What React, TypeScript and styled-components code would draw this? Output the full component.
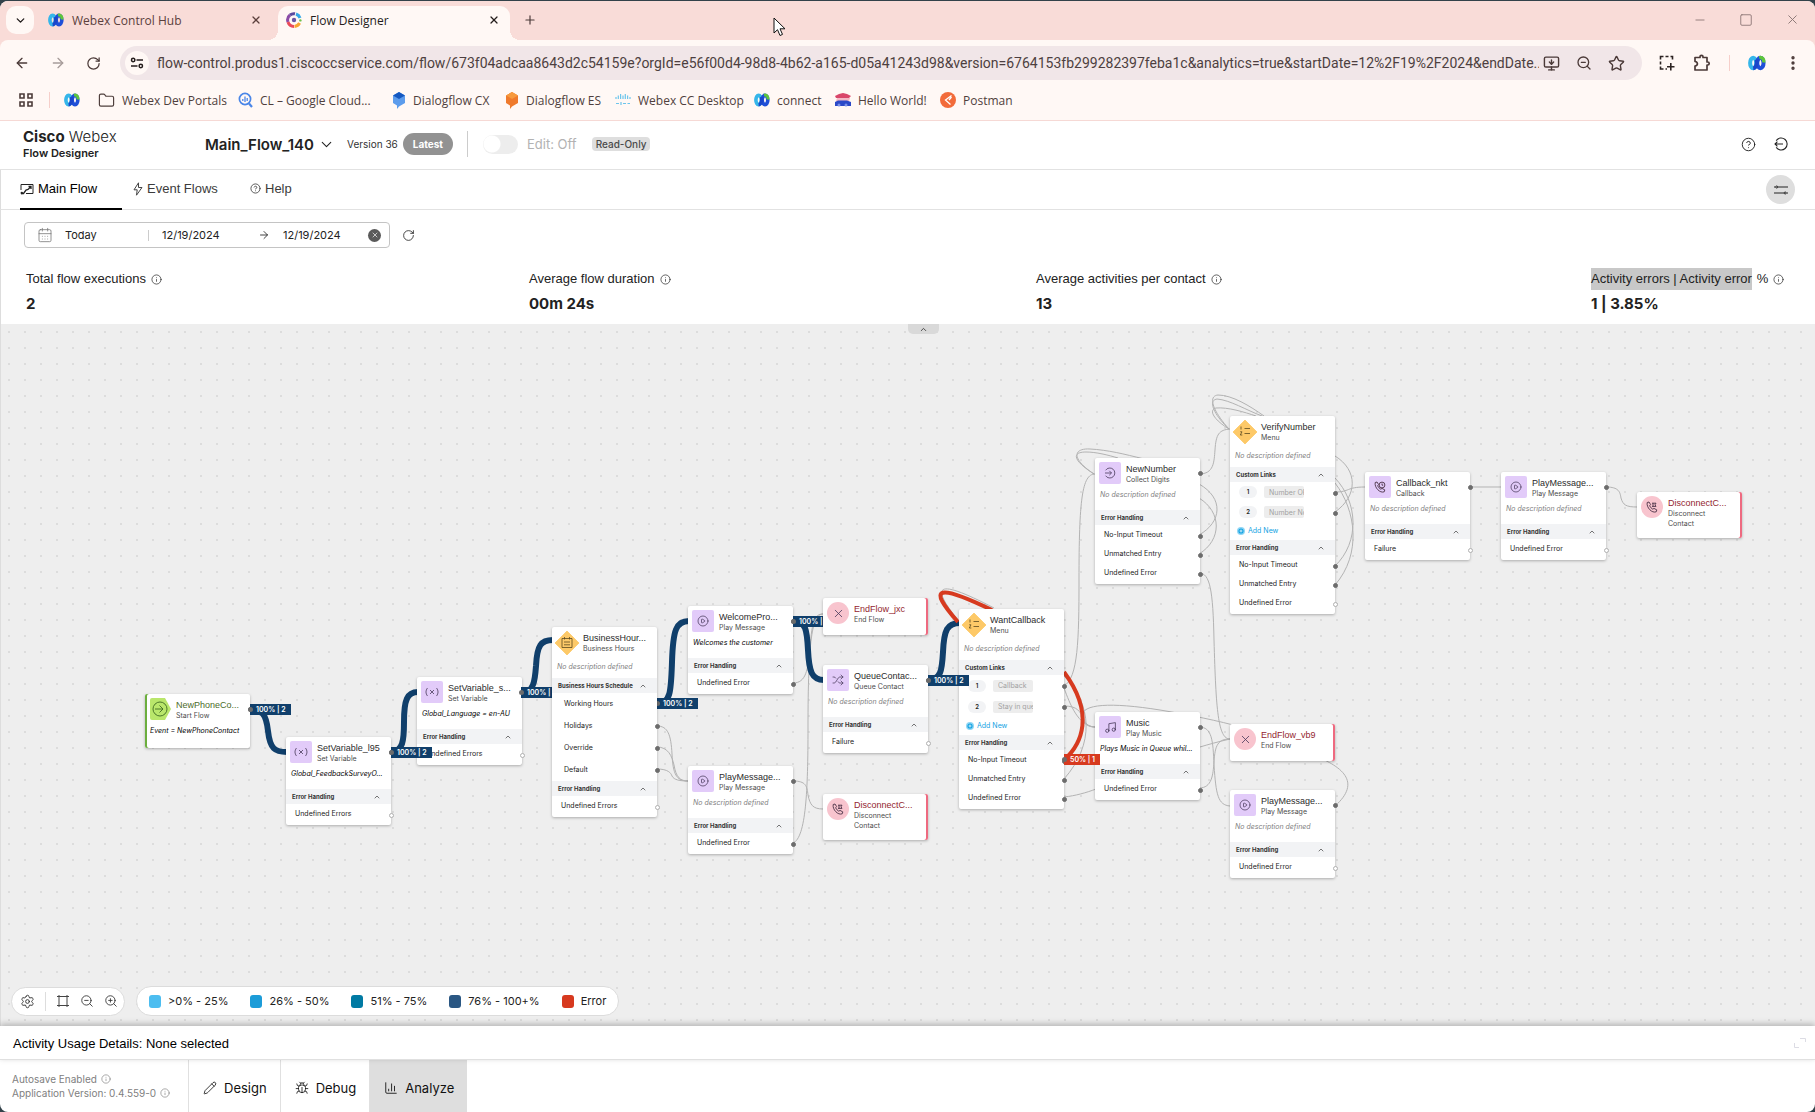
import React from "react";
import styled, { createGlobalStyle, css } from "styled-components";
import {
  ArrowLeft, ArrowRight, RotateCw, X, Plus, ChevronDown, ChevronUp, Folder, Star,
  MoreVertical, ZoomIn, ZoomOut, Info, CircleHelp, Minus, Square, MonitorDown,
  Settings, Pencil, Bug, ChartColumn, Shuffle, CirclePlay, Music, CalendarDays,
} from "lucide-react";

const ui = `Inter, "Liberation Sans", sans-serif`;
const label = `"Liberation Sans", Arial, sans-serif`;
const chrome = `"Open Sans", "Noto Sans", sans-serif`;
const navy = "#103f6b";
const errorRed = "#d73a1f";

const GlobalStyle = createGlobalStyle`
  * { box-sizing: border-box; }
  html, body { margin: 0; background: #33424a; }
  body { font-family: ${ui}; color: #222; }
  button { font: inherit; color: inherit; background: none; border: 0; padding: 0; cursor: pointer; }
  input { font: inherit; color: inherit; background: none; border: 0; padding: 0; min-width: 0; }
  a { color: inherit; text-decoration: none; }
  svg { display: block; flex: none; }
`;

const Desktop = styled.div`
  height: 100vh;
  padding-top: 1px;
`;

const Window = styled.div`
  height: 100%;
  display: flex;
  flex-direction: column;
  border-radius: 8px;
  overflow: hidden;
  background: #fff;
`;

/* ---------- browser frame ---------- */

const TabStrip = styled.header`
  display: flex;
  align-items: flex-end;
  height: 47px;
  margin-bottom: -8px;
  padding: 0 0 8px 6px;
  background: #f9dcd8;
  font-family: ${chrome};
  font-size: 12px;
`;

const TabSearch = styled.button`
  display: grid;
  place-items: center;
  width: 28px;
  height: 28px;
  margin-bottom: 6px;
  border-radius: 10px;
  background: #fff8f5;
  color: #1f1b1a;
`;

const BrowserTab = styled.div<{ $active?: boolean }>`
  position: relative;
  display: flex;
  align-items: center;
  gap: 8px;
  width: ${(p) => (p.$active ? 232 : 244)}px;
  height: 34px;
  padding: ${(p) => (p.$active ? "4px 10px 10px 8px" : "4px 16px 10px 14px")};
  color: ${(p) => (p.$active ? "#241d1c" : "#5b403d")};
  ${(p) =>
    p.$active &&
    css`
      background: #fff8f5;
      border-radius: 10px 10px 0 0;
      &::before,
      &::after {
        content: "";
        position: absolute;
        bottom: 0;
        width: 10px;
        height: 10px;
      }
      &::before {
        left: -10px;
        background: radial-gradient(circle at 0 0, transparent 10px, #fff8f5 10px);
      }
      &::after {
        right: -10px;
        background: radial-gradient(circle at 100% 0, transparent 10px, #fff8f5 10px);
      }
    `}
  button {
    margin-left: auto;
  }
`;

const NewTab = styled.button`
  display: grid;
  place-items: center;
  width: 28px;
  height: 28px;
  margin: 0 0 6px 6px;
  color: #4b3a38;
`;

const WindowButtons = styled.div`
  display: flex;
  gap: 32px;
  margin: 0 15px 13px auto;
  color: #8a7573;
`;

const Toolbar = styled.div`
  position: relative;
  display: flex;
  align-items: center;
  height: 46px;
  padding: 0 13px 0 14px;
  background: #fff8f5;
  border-radius: 8px 8px 0 0;
  color: #4b3a38;
`;

const NavButtons = styled.div`
  display: flex;
  gap: 20px;
  width: 106px;
`;

const NavButton = styled.button<{ $muted?: boolean }>`
  color: ${(p) => (p.$muted ? "#a79c9a" : "#4b3a38")};
`;

const AddressBar = styled.div`
  flex: 1;
  display: flex;
  align-items: center;
  height: 34px;
  padding: 0 17px 0 5px;
  border-radius: 17px;
  background: #f1e6e8;
  gap: 8px;
`;

const AddressActions = styled.div`
  display: flex;
  align-items: center;
  gap: 16px;
  margin-left: -4px;
`;

const SiteInfo = styled.button`
  display: grid;
  place-items: center;
  width: 24px;
  height: 24px;
  border-radius: 50%;
  background: #fff8f5;
`;

const Address = styled.input`
  flex: 1;
  font-family: Roboto, sans-serif;
  font-size: 14px;
  height: 24px;
  color: #4d3f40;
  outline: none;
`;

const ToolbarEnd = styled.div`
  display: flex;
  align-items: center;
  gap: 18px;
  margin-left: 17px;
`;

const Divider = styled.span<{ $h: number; $color: string }>`
  width: 1px;
  height: ${(p) => p.$h}px;
  background: ${(p) => p.$color};
`;

const Bookmarks = styled.nav`
  display: flex;
  align-items: center;
  height: 35px;
  padding: 0 18px 6px;
  background: #fff8f5;
  border-bottom: 1px solid #f6d9d5;
  font-family: ${chrome};
  font-size: 12px;
  color: #4f3f3d;
`;

const Bookmark = styled.a<{ $w?: number; $first?: boolean }>`
  display: flex;
  align-items: center;
  gap: 7px;
  width: ${(p) => (p.$w ? `${p.$w}px` : "auto")};
  padding-left: ${(p) => (p.$first ? 14 : 0)}px;
  white-space: nowrap;
`;

/* ---------- application header ---------- */

const AppBody = styled.main`
  flex: 1;
  min-height: 0;
  display: flex;
  flex-direction: column;
`;

const AppHeader = styled.div`
  display: flex;
  align-items: center;
  height: 49px;
  padding: 0 27px 2px 23px;
  border-bottom: 1px solid #e2e2e2;
`;

const Brand = styled.div`
  width: 182px;
  strong { font-weight: 700; }
  div:first-child { font-size: 15px; line-height: 18px; font-weight: 300; }
  div:last-child { font-size: 11px; line-height: 14px; font-weight: 600; }
`;

const FlowPicker = styled.button`
  display: flex;
  align-items: center;
  gap: 4px;
  font-size: 15px;
  font-weight: 600;
`;

const Version = styled.span`
  margin-left: 12px;
  font-size: 10px;
  color: #333;
`;

const Pill = styled.span`
  margin: 0 14px 0 5px;
  padding: 0 10px;
  border-radius: 11px;
  background: #929292;
  color: #fff;
  font-size: 10px;
  font-weight: 700;
  line-height: 22px;
`;

const EditToggle = styled.label`
  display: flex;
  align-items: center;
  gap: 9px;
  margin: 0 15px;
  font-size: 13px;
  color: #b2b2b2;
  input {
    appearance: none;
    margin: 0;
    width: 35px;
    height: 19px;
    border-radius: 10px;
    background: radial-gradient(circle at 9px 9px, #fff 8px, #ededed 9px);
  }
`;

const ReadOnly = styled.span`
  padding: 0 4px;
  border-radius: 4px;
  background: #dedede;
  color: #4a4a4a;
  font-size: 10px;
  font-weight: 500;
  line-height: 14px;
`;

const HeaderActions = styled.div`
  display: flex;
  gap: 18px;
  margin-left: auto;
`;

const TabsBar = styled.div`
  display: flex;
  align-items: center;
  height: 40px;
  padding: 0 20px 0 19px;
  border-left: 1px solid #ddd;
  border-bottom: 1px solid #e2e2e2;
`;

const FlowTab = styled.button<{ $active?: boolean; $w: number }>`
  display: flex;
  align-items: center;
  gap: 4px;
  width: ${(p) => p.$w}px;
  height: 40px;
  font-family: ${label};
  font-size: 13px;
  color: ${(p) => (p.$active ? "#000" : "#3c3c3c")};
  border-bottom: 2px solid ${(p) => (p.$active ? "#000" : "transparent")};
  margin-right: 11px;
`;

const RoundButton = styled.button`
  display: grid;
  place-items: center;
  width: 29px;
  height: 29px;
  margin-left: auto;
  border-radius: 50%;
  background: #dedede;
`;

const Analytics = styled.section`
  border-left: 1px solid #ddd;
`;

const FilterRow = styled.div`
  display: flex;
  align-items: center;
  gap: 12px;
  padding: 12px 23px 0;
`;

const DateRange = styled.div`
  display: flex;
  align-items: center;
  width: 366px;
  height: 26px;
  padding: 0 8px 0 12px;
  border: 1px solid #c4c4c4;
  border-radius: 4px;
  font-size: 11px;
  color: #222;
`;

const Preset = styled.button`
  width: 83px;
  margin-left: 12px;
  text-align: left;
`;

const DateField = styled.input<{ $w: number }>`
  width: ${(p) => p.$w}px;
  margin-left: 13px;
`;

const ClearButton = styled.button`
  display: grid;
  place-items: center;
  width: 13px;
  height: 13px;
  border-radius: 50%;
  background: #5a5a5a;
  color: #fff;
  margin-left: auto;
`;

const Metrics = styled.div`
  display: grid;
  grid-template-columns: 503fr 507fr 555fr 199px;
  padding: 20px 25px 8px;
  white-space: nowrap;
`;

const MetricLabel = styled.div`
  display: flex;
  align-items: center;
  gap: 5px;
  font-family: ${label};
  font-size: 13px;
  line-height: 22px;
  mark {
    background: #c8c8c8;
    color: inherit;
  }
`;

const MetricValue = styled.div`
  margin-top: 2px;
  font-size: 15px;
  font-weight: 700;
  line-height: 24px;
`;

/* ---------- flow canvas ---------- */

const Canvas = styled.section`
  position: relative;
  flex: 1;
  min-height: 0;
  overflow: hidden;
  border-left: 1px solid #ddd;
  background: conic-gradient(from 270deg at 2px 2px, #dcdcdc 90deg, transparent 0) 7px 7px / 16px 16px #eee;
`;

const Collapse = styled.button`
  position: absolute;
  top: 0;
  left: 907px;
  display: grid;
  place-items: center;
  width: 31px;
  height: 10px;
  border-radius: 0 0 5px 5px;
  background: #d9d9d9;
`;

const Wires = styled.svg`
  position: absolute;
  inset: 0;
  fill: none;
`;

const Card = styled.article<{ $x: number; $y: number; $raised?: boolean; $kind: Kind; $h: number }>`
  position: absolute;
  left: ${(p) => p.$x - 1}px;
  top: ${(p) => p.$y}px;
  z-index: ${(p) => (p.$raised ? 3 : 1)};
  width: 105px;
  min-height: ${(p) => p.$h}px;
  padding-bottom: 2px;
  border-radius: 2px;
  background: #fff;
  box-shadow: 0 1px 3px rgba(0, 0, 0, 0.28);
  font-size: 7px;
  line-height: 10px;
  ${(p) => p.$kind === "start" && "box-shadow: inset 2px 0 #6cae3e, 0 1px 3px rgba(0,0,0,.28);"}
  ${(p) => p.$kind === "end" && "box-shadow: inset -2px 0 #ee6a80, 0 1px 3px rgba(0,0,0,.28);"}
`;

const CardHead = styled.div<{ $tall?: boolean }>`
  display: flex;
  gap: 5px;
  padding: ${(p) => (p.$tall ? "5px 4px 8px" : "4px 4px 5px")};
`;

const CardName = styled.div<{ $tall?: boolean }>`
  padding-top: ${(p) => (p.$tall ? 0 : 1)}px;
`;

const IconBox = styled.div<{ $kind: Kind }>`
  display: flex;
  align-items: center;
  justify-content: center;
  width: 22px;
  height: 22px;
  flex: none;
  color: #4a3b5c;
  border-radius: ${(p) => (p.$kind === "end" ? "50%" : "2px")};
  background: ${(p) =>
    p.$kind === "end" ? "#f8c4ce" : p.$kind === "action" ? "#e2cbf9" : "none"};
`;

const CardTitle = styled.div<{ $kind: Kind }>`
  font-family: ${label};
  font-size: 9px;
  line-height: 12px;
  white-space: nowrap;
  color: ${(p) => (p.$kind === "end" ? "#93252f" : p.$kind === "start" ? "#4c6b2a" : "#2b2b2b")};
`;

const CardType = styled.div`
  width: 58px;
  color: #4c4c4c;
`;

const Desc = styled.p<{ $tall?: boolean; $set?: boolean }>`
  margin: 0;
  padding: 0 5px ${(p) => (p.$tall ? 6 : 10)}px;
  font-style: italic;
  white-space: nowrap;
  color: ${(p) => (p.$set ? "#000" : "#808080")};
`;

const Band = styled.button`
  display: flex;
  justify-content: space-between;
  align-items: center;
  width: 100%;
  height: 15px;
  padding: 0 10px 0 6px;
  background: #f2f3f5;
  font-size: 6px;
  font-weight: 700;
  color: #333;
`;

const Row = styled.div<{ $h: number; $pad: number }>`
  position: relative;
  display: flex;
  align-items: center;
  gap: 7px;
  height: ${(p) => p.$h}px;
  padding-left: ${(p) => p.$pad}px;
  color: #222;
`;

const Port = styled.i<{ $open?: boolean; $top: number }>`
  position: absolute;
  right: -3px;
  top: ${(p) => p.$top}px;
  width: 5px;
  height: 5px;
  border-radius: 50%;
  border: 1px solid ${(p) => (p.$open ? "#b0b0b0" : "#6c6c6c")};
  background: ${(p) => (p.$open ? "#fff" : "#6c6c6c")};
`;

const LinkNumber = styled.span`
  width: 18px;
  height: 12px;
  border-radius: 6px;
  background: #f2f3f5;
  font-size: 6px;
  font-weight: 600;
  line-height: 12px;
  text-align: center;
`;

const LinkInput = styled.input`
  width: 40px;
  height: 12px;
  padding-left: 5px;
  border-radius: 2px;
  background: #ededed;
  color: #a2a2a2;
`;

const AddNew = styled.button`
  display: flex;
  align-items: center;
  gap: 3px;
  height: 18px;
  padding-left: 7px;
  color: #14a3e3;
`;

const Tag = styled.span<{ $x: number; $y: number; $error?: boolean }>`
  position: absolute;
  left: ${(p) => p.$x - 1}px;
  top: ${(p) => p.$y}px;
  z-index: 2;
  padding: 0 5px 0 6px;
  background: ${(p) => (p.$error ? errorRed : navy)};
  color: #fff;
  font-size: 7px;
  font-weight: 600;
  line-height: 11px;
  white-space: nowrap;
  &::before {
    content: "";
    position: absolute;
    left: -2px;
    top: 3px;
    width: 5px;
    height: 5px;
    border-radius: 50%;
    background: #6c6c6c;
  }
`;

const CanvasTools = styled.div`
  position: absolute;
  z-index: 4;
  left: 10px;
  bottom: 10px;
  display: flex;
  align-items: center;
  gap: 11px;
`;

const ToolPill = styled.div`
  display: flex;
  align-items: center;
  gap: 10px;
  height: 29px;
  padding: 0 6px 0 8px;
  border: 1px solid #dcdcdc;
  border-radius: 15px;
  background: #fff;
  color: #333;
`;

const Legend = styled.ul`
  display: flex;
  align-items: center;
  gap: 22px;
  height: 30px;
  margin: 0;
  padding: 0 12px;
  border: 1px solid #dcdcdc;
  border-radius: 15px;
  background: #fff;
  list-style: none;
  font-size: 11px;
`;

const LegendItem = styled.li<{ $color: string }>`
  display: flex;
  align-items: center;
  gap: 7px;
  &::before {
    content: "";
    width: 12px;
    height: 13px;
    border-radius: 3px;
    background: ${(p) => p.$color};
  }
`;

/* ---------- footer ---------- */

const Details = styled.div`
  position: relative;
  z-index: 5;
  display: flex;
  align-items: center;
  justify-content: space-between;
  height: 34px;
  padding: 1px 9px 0 13px;
  border-bottom: 1px solid #e0e0e0;
  background: #fff;
  box-shadow: 0 -2px 6px rgba(0, 0, 0, 0.25);
  font-family: ${label};
  font-size: 13px;
  color: #000;
`;

const BottomBar = styled.footer`
  display: flex;
  height: 52px;
`;

const Status = styled.div`
  display: flex;
  flex-direction: column;
  justify-content: center;
  width: 188px;
  padding-left: 12px;
  font-size: 10px;
  line-height: 14px;
  color: #808080;
  div { display: flex; align-items: center; gap: 4px; }
`;

const ModeButton = styled.button<{ $active?: boolean }>`
  display: flex;
  align-items: center;
  gap: 7px;
  padding: 4px 13px 0 14px;
  border-left: 1px solid #e0e0e0;
  background: ${(p) => (p.$active ? "#dedede" : "#fff")};
  font-size: 13px;
  color: #111;
`;

const Pointer = styled.svg`
  position: absolute;
  left: 773px;
  top: 17px;
  z-index: 10;
`;

/* ---------- drawings ---------- */

const WebexIcon = ({ size = 16 }: { size?: number }) => (
  <svg width={size} height={size} viewBox="0 0 16 16" fill="none">
    <ellipse cx="4.6" cy="8" rx="2.7" ry="4.6" stroke="#35b6ea" strokeWidth="3.6" />
    <ellipse cx="11" cy="8" rx="2.8" ry="4.6" stroke="#1f4fd8" strokeWidth="3.6" />
    <path d="M7.6 5C8.2 9 7 12.5 4.6 12.7" stroke="#1b46c9" strokeWidth="3.4" />
    <path d="M10 3.2C13 2.4 14.3 5 14 7.5" stroke="#5fc63b" strokeWidth="3" />
  </svg>
);

const FlowIcon = () => (
  <svg width="16" height="16" viewBox="0 0 16 16" fill="none" strokeWidth="3">
    <path d="M2 10A6.3 6.3 0 0 1 4 3" stroke="#8b4da8" />
    <path d="M4 3A6.3 6.3 0 0 1 9 1.8" stroke="#5b4a9e" />
    <path d="M10 2A6.3 6.3 0 0 1 14 6" stroke="#35a8e8" />
    <path d="M2 10A6.3 6.3 0 0 0 8 14.4" stroke="#ea4a5a" />
    <path d="M8.5 14.4A6.3 6.3 0 0 0 13.6 11" stroke="#f8a531" />
    <circle cx="8" cy="8" r="2.2" fill="#6a56a5" />
    <circle cx="14.4" cy="8.4" r="1.2" fill="#6cc04a" />
  </svg>
);

const TuneIcon = () => (
  <svg width="14" height="14" viewBox="0 0 14 14" fill="none" stroke="#241d1c" strokeWidth="1.5">
    <circle cx="3.2" cy="4" r="1.7" /><path d="M6.5 4H13" />
    <circle cx="10.8" cy="10" r="1.7" /><path d="M1 10H7.5" />
  </svg>
);

const AppsIcon = () => (
  <svg width="16" height="16" viewBox="0 0 16 16" fill="none" stroke="#4b3a38" strokeWidth="1.6">
    <path d="M2 2h4v4H2zM10 2h4v4h-4zM2 10h4v4H2zM10 10h4v4h-4z" />
  </svg>
);

const CloudSearchIcon = () => (
  <svg width="15" height="16" viewBox="0 0 15 16" fill="none" stroke="#4a86e8" strokeWidth="1.7">
    <circle cx="7" cy="7" r="5.6" /><path d="M11 11.5 14 15" strokeWidth="2.2" />
    <path d="M4.8 7v2M7 4.5V10M9.2 6v3" strokeWidth="1.3" />
  </svg>
);

const HexIcon = ({ top, body }: { top: string; body: string }) => (
  <svg width="14" height="17" viewBox="0 0 14 17">
    <path d="M7 0 13 3.4V11L7 14.4 5 17V13.4L1 11V3.4Z" fill={body} />
    <path d="M7 0 13 3.4 7 7 1 3.4Z" fill={top} />
  </svg>
);

const CiscoIcon = () => (
  <svg width="16" height="12" viewBox="0 0 16 12" stroke="#6cc5ec" strokeWidth="1.2" fill="none">
    <path d="M1 3v2M3.3 1.5V5M5.6 0v5M8 1.5V5M10.3 0v5M12.6 1.5V5M15 3v2M1 9.5h3M6 8v3M8 9.5h3M12.5 9.5H15" />
  </svg>
);

const HelloIcon = () => (
  <svg width="16" height="14" viewBox="0 0 16 14">
    <path d="M0 3 4 1 8 0l4 1 4 2-2 2H1Z" fill="#d9466a" /><path d="M2 5h13l-1 3H1Z" fill="#f2b8c6" />
    <path d="M0 9 3 7.5h9L16 9v4H0Z" fill="#2b49c8" />
    <circle cx="4" cy="12" r="1.5" fill="#7d92e8" /><circle cx="11" cy="12" r="1.5" fill="#7d92e8" />
  </svg>
);

const PostmanIcon = () => (
  <svg width="16" height="16" viewBox="0 0 16 16">
    <circle cx="8" cy="8" r="8" fill="#f26b3a" />
    <path d="M11.5 3.5 5.5 8l5 4.5M9 8l2.5-3" stroke="#fff" strokeWidth="1.3" fill="none" />
  </svg>
);

const CaptureIcon = () => (
  <svg width="16" height="16" viewBox="0 0 16 16" fill="none" stroke="#2c2322" strokeWidth="1.6">
    <path d="M1.5 4.5V1.5H4.5M6.5 1.5h3M11.5 1.5h2v3M1.5 6.5v3M1.5 11.5v2.5H4.5M6.5 14h1.5M11.8 8v7.5M8 11.8h7.5" />
  </svg>
);

const ExtensionIcon = () => (
  <svg width="18" height="18" viewBox="0 0 18 18" fill="none" stroke="#4b3a38" strokeWidth="1.7" strokeLinejoin="round">
    <path d="M2 3.5H7V2.8a1.5 1.5 0 0 1 3 0v.7H14V8h.7a1.5 1.5 0 0 1 0 3H14V16H2V12c3.2-.6 3.2-4 0-4.5Z" />
  </svg>
);

const ExitIcon = () => (
  <svg width="14" height="14" viewBox="0 0 14 14" fill="none" stroke="#222" strokeWidth="1.1">
    <path d="M2.2 3.6A6 6 0 1 1 2.2 10.4M9 7H1M3.4 4.6 1 7l2.4 2.4" />
  </svg>
);

const SlidersIcon = () => (
  <svg width="14" height="12" viewBox="0 0 14 12" fill="none" stroke="#222" strokeWidth="1">
    <path d="M0 3h1.5M4 3H14M0 9h10M12.5 9H14" /><circle cx="2.7" cy="3" r="1" /><circle cx="11.2" cy="9" r="1" />
  </svg>
);

const MainFlowIcon = () => (
  <svg width="14" height="12" viewBox="0 0 14 12" fill="none" stroke="#222">
    <path d="M1 7V1.5h12v9H6" /><path d="M1 10.5h2.5L6 7l2-.5 3-3M8.5 3.5H11V6" strokeWidth="1.3" />
    <circle cx="1.8" cy="10" r="1.2" fill="#222" stroke="none" />
  </svg>
);

const BoltIcon = () => (
  <svg width="10" height="14" viewBox="0 0 10 14" fill="none" stroke="#444" strokeLinejoin="round">
    <path d="M5.5.8 1 7.8H4.2L3.5 13.2 9 5.5H5.5Z" />
  </svg>
);

const FitIcon = () => (
  <svg width="14" height="14" viewBox="0 0 14 14" fill="none" stroke="#444" strokeWidth="1">
    <path d="M3 1v12M11 1v12M1 2.5h2M11 2.5h2M3 2.5h8M3 11.5h8M1 11.5h2M11 11.5h2" />
  </svg>
);

const ExpandIcon = () => (
  <svg width="12" height="10" viewBox="0 0 12 10" fill="none" stroke="#dcdce4">
    <path d="M6 .5h5.5V4M.5 5v4.5H5" />
  </svg>
);

const VariableIcon = () => (
  <svg width="14" height="10" viewBox="0 0 14 10" fill="none" stroke="#4a3b5c" strokeWidth=".8">
    <path d="M2.5 1C.5 3.5.5 6.5 2.5 9M11.5 1c2 2.5 2 5.5 0 8M5 3l4 4M9 3 5 7" />
  </svg>
);

const HandsetIcon = ({ clock }: { clock?: boolean }) => (
  <svg width="12" height="12" viewBox="0 0 12 12" fill="none" stroke="#4a3045" strokeWidth=".9" strokeLinejoin="round">
    <path d="M1.2 1.5 3 1l1.6 2.6-1 1.2c.6 1.4 1.7 2.6 3.2 3.4L8 7.4l2.8 1.5-.6 1.9C6 12.5.2 6.5 1.2 1.5Z" />
    {clock ? <><circle cx="8" cy="4" r="2.9" /><path d="M8 2.5V4.2H9.2" /></> : <path d="M6 2.2h4M6 5.4h4M7 2.2v3.2M10 2.2l-1 1.6 1 1.6" />}
  </svg>
);

const Diamond = ({ children }: { children: React.ReactNode }) => (
  <svg width="26" height="26" viewBox="0 0 26 26" fill="none" stroke="#5c4a20" strokeWidth=".8">
    <path d="M13 1 25 13 13 25 1 13Z" fill="#fdc968" stroke="#fdc968" strokeLinejoin="round" />
    {children}
  </svg>
);

const MenuIcon = () => (
  <Diamond><path d="M12.5 9.5h5.5M12.5 14.5h5.5M9 7.5v3M8.2 12.8h1.8L8.3 16h2" /></Diamond>
);

const HoursIcon = () => (
  <Diamond><path d="M8 8.5h10v9H8ZM10.5 7v2.5M15.5 7v2.5M10 12h6M10 14.8h6" /></Diamond>
);

const StartIcon = () => (
  <svg width="24" height="22" viewBox="0 0 24 22" fill="none" stroke="#3f6b22" strokeWidth=".9">
    <path d="M2 2q0-2 2-2h13l6 11-6 11H4q-2 0-2-2Z" fill="#b9e66b" stroke="none" />
    <circle cx="12" cy="11" r="7" /><path d="M7 11h8M11.5 7.500 15 11l-3.500 3.500" />
  </svg>
);

const CollectIcon = () => (
  <svg width="12" height="12" viewBox="0 0 12 12" fill="none" stroke="#4a3b5c" strokeWidth=".8">
    <path d="M1.6 3.3A5 5 0 1 1 1.6 8.7M1 6h6.5M5.3 3.8 7.5 6 5.3 8.2" />
  </svg>
);

/* ---------- data ---------- */

type Kind = "start" | "action" | "decision" | "end";
type RowData = { text: string; port?: "full" | "open"; link?: number };
type Section = { title: string; rows: RowData[]; rowHeight?: number; pad?: number; addNew?: boolean };
type NodeData = {
  id: string; x: number; y: number; h: number; kind: Kind; icon: React.ReactNode; title: string;
  type: string; desc?: string; tall?: boolean; raised?: boolean; out?: boolean; sections?: Section[];
};

const empty = "No description defined";
const play = <CirclePlay size={12} strokeWidth={1.5} />;
const end = <X size={13} strokeWidth={1.5} />;
const hangup = <HandsetIcon />;

const errors = (...rows: RowData[]): Section => ({ title: "Error Handling", rows });
const inputErrors = (last: "full" | "open") =>
  errors(
    { text: "No-Input Timeout", port: "full" },
    { text: "Unmatched Entry", port: "full" },
    { text: "Undefined Error", port: last },
  );

const nodes: NodeData[] = [
  { id: "start", x: 145, y: 370, h: 53, kind: "start", icon: <StartIcon />, title: "NewPhoneCo...", type: "Start Flow", desc: "Event = NewPhoneContact", out: true },
  { id: "var1", x: 286, y: 413, h: 88, kind: "action", icon: <VariableIcon />, title: "SetVariable_l95", type: "Set Variable", desc: "Global_FeedbackSurveyO...", out: true, sections: [errors({ text: "Undefined Errors", port: "open" })] },
  { id: "var2", x: 417, y: 353, h: 88, kind: "action", icon: <VariableIcon />, title: "SetVariable_s...", type: "Set Variable", desc: "Global_Language = en-AU", out: true, sections: [errors({ text: "Undefined Errors", port: "open" })] },
  {
    id: "hours", x: 552, y: 303, h: 189, kind: "decision", icon: <HoursIcon />, title: "BusinessHour...", type: "Business Hours", desc: empty, tall: true, raised: true,
    sections: [
      { title: "Business Hours Schedule", rowHeight: 22, pad: 12, rows: [{ text: "Working Hours" }, { text: "Holidays", port: "full" }, { text: "Override", port: "full" }, { text: "Default", port: "full" }] },
      errors({ text: "Undefined Errors", port: "open" }),
    ],
  },
  { id: "welcome", x: 688, y: 282, h: 88, kind: "action", icon: play, title: "WelcomePro...", type: "Play Message", desc: "Welcomes the customer", out: true, sections: [errors({ text: "Undefined Error", port: "full" })] },
  { id: "play1", x: 688, y: 442, h: 88, kind: "action", icon: play, title: "PlayMessage...", type: "Play Message", desc: empty, out: true, sections: [errors({ text: "Undefined Error", port: "full" })] },
  { id: "end1", x: 823, y: 274, h: 37, kind: "end", icon: end, title: "EndFlow_jxc", type: "End Flow", raised: true },
  { id: "queue", x: 823, y: 341, h: 88, kind: "action", icon: <Shuffle size={12} strokeWidth={1.5} />, title: "QueueContac...", type: "Queue Contact", desc: empty, out: true, sections: [errors({ text: "Failure", port: "open" })] },
  { id: "disc1", x: 823, y: 470, h: 46, kind: "end", icon: hangup, title: "DisconnectC...", type: "Disconnect Contact" },
  {
    id: "want", x: 959, y: 285, h: 200, kind: "decision", icon: <MenuIcon />, title: "WantCallback", type: "Menu", desc: empty, tall: true,
    sections: [
      { title: "Custom Links", rowHeight: 21, pad: 9, addNew: true, rows: [{ text: "Callback", port: "full", link: 1 }, { text: "Stay in queue", port: "full", link: 2 }] },
      inputErrors("full"),
    ],
  },
  { id: "music", x: 1095, y: 388, h: 88, kind: "action", icon: <Music size={13} strokeWidth={1.5} />, title: "Music", type: "Play Music", desc: "Plays Music in Queue whil...", out: true, sections: [errors({ text: "Undefined Error", port: "full" })] },
  { id: "end2", x: 1230, y: 400, h: 37, kind: "end", icon: end, title: "EndFlow_vb9", type: "End Flow" },
  { id: "play2", x: 1230, y: 466, h: 88, kind: "action", icon: play, title: "PlayMessage...", type: "Play Message", desc: empty, out: true, sections: [errors({ text: "Undefined Error", port: "open" })] },
  { id: "number", x: 1095, y: 134, h: 126, kind: "action", icon: <CollectIcon />, title: "NewNumber", type: "Collect Digits", desc: empty, out: true, sections: [inputErrors("full")] },
  {
    id: "verify", x: 1230, y: 92, h: 198, kind: "decision", icon: <MenuIcon />, title: "VerifyNumber", type: "Menu", desc: empty, tall: true,
    sections: [
      { title: "Custom Links", rowHeight: 20, pad: 9, addNew: true, rows: [{ text: "Number OK", port: "full", link: 1 }, { text: "Number Not OK", port: "full", link: 2 }] },
      inputErrors("open"),
    ],
  },
  { id: "callback", x: 1365, y: 148, h: 88, kind: "action", icon: <HandsetIcon clock />, title: "Callback_nkt", type: "Callback", desc: empty, out: true, sections: [errors({ text: "Failure", port: "open" })] },
  { id: "play3", x: 1501, y: 148, h: 88, kind: "action", icon: play, title: "PlayMessage...", type: "Play Message", desc: empty, out: true, sections: [errors({ text: "Undefined Error", port: "open" })] },
  { id: "disc2", x: 1637, y: 168, h: 46, kind: "end", icon: hangup, title: "DisconnectC...", type: "Disconnect Contact" },
];

const tags = [
  { x: 250, y: 380, text: "100% | 2" },
  { x: 391, y: 423, text: "100% | 2" },
  { x: 521, y: 363, text: "100% | 2" },
  { x: 657, y: 374, text: "100% | 2" },
  { x: 793, y: 292, text: "100% | 2" },
  { x: 928, y: 351, text: "100% | 2" },
  { x: 1064, y: 430, text: "50% | 1", error: true },
];

const heavyWires = [
  "M250 386C262 386 266 389 268 407C270 425 275 428 287 428",
  "M391 428C403 428 404 416 404 398C404 376 407 368 418 368",
  "M521 369C534 369 535 356 536 342C537 321 541 316 553 316",
  "M657 380C671 380 671 366 672 338C673 306 676 297 689 297",
  "M793 297C806 297 807 306 808 326C809 348 812 356 824 356",
  "M928 356C941 356 942 346 943 328C944 306 947 299 960 299",
];

const errorWires = ["M958 298C926 262 938 260 992 286", "M1064 348C1095 390 1082 420 1064 436"];

const thinWires = [
  "M657 402C668 402 671 411 672 430C673 450 676 457 688 457",
  "M657 423C668 423 672 432 674 441C676 453 680 457 688 457",
  "M657 445C668 445 671 449 672 452C674 456 680 457 688 457",
  "M793 359C806 359 808 346 810 324C812 296 815 290 823 290",
  "M793 457C806 457 807 462 808 471C810 481 813 485 823 485",
  "M793 519C806 514 808 466 808 404C808 316 812 290 823 290",
  "M1064 362C1078 354 1079 316 1079 256C1079 176 1082 150 1095 150",
  "M1064 382C1078 382 1080 388 1083 394C1086 401 1090 403 1095 403",
  "M1064 364C1070 380 1078 402 1095 403",
  "M1064 455C1095 420 1092 380 1064 352",
  "M957 295C928 258 940 256 994 284",
  "M1199 403C1212 403 1213 416 1214 441C1216 471 1218 481 1230 482",
  "M1199 464C1212 464 1213 451 1214 438C1215 421 1218 415 1230 415",
  "M1199 249C1210 249 1213 266 1214 316C1216 386 1218 415 1230 415",
  "M1064 473C1110 468 1140 436 1230 415",
  "M1335 482C1362 458 1343 442 1310 430C1270 408 1220 396 1160 386C1110 378 1082 380 1082 392C1083 400 1088 403 1095 403",
  "M1094 150C1070 134 1074 124 1090 125C1108 126 1124 130 1144 135",
  "M1094 150C1072 136 1072 128 1086 128C1096 128 1108 131 1118 134",
  "M1199 211C1222 198 1224 174 1199 160",
  "M1199 230C1222 216 1222 188 1199 174",
  "M1199 150C1214 150 1214 138 1215 126C1216 110 1219 106 1230 105",
  "M1229 105C1212 86 1208 72 1218 71C1232 71 1250 82 1264 92",
  "M1229 105C1213 90 1208 76 1217 75C1230 76 1246 86 1262 92",
  "M1229 105C1214 96 1208 86 1216 84C1228 83 1244 88 1256 92",
  "M1335 168C1350 168 1346 163 1365 163",
  "M1335 188C1358 172 1358 146 1335 132",
  "M1335 242C1360 218 1358 178 1335 154",
  "M1335 261C1362 230 1356 186 1335 159",
  "M1470 163H1501",
  "M1606 163C1619 163 1620 168 1621 174C1623 181 1626 183 1637 183",
];

const metrics = [
  { label: "Total flow executions", value: "2" },
  { label: "Average flow duration", value: "00m 24s" },
  { label: "Average activities per contact", value: "13" },
];

const legend = [
  [">0% - 25%", "#4cbdf0"],
  ["26% - 50%", "#1c9cd8"],
  ["51% - 75%", "#007aa3"],
  ["76% - 100+%", "#2a5783"],
  ["Error", "#d7391f"],
];

/* ---------- components ---------- */

function FlowNode({ node }: { node: NodeData }) {
  return (
    <Card $x={node.x} $y={node.y} $h={node.h} $kind={node.kind} $raised={node.raised}>
      <CardHead $tall={node.tall}>
        <IconBox $kind={node.kind}>{node.icon}</IconBox>
        <CardName $tall={node.tall}>
          <CardTitle $kind={node.kind}>{node.title}</CardTitle>
          <CardType>{node.type}</CardType>
        </CardName>
      </CardHead>
      {node.out && <Port $top={13} />}
      {node.desc && <Desc $tall={node.tall} $set={node.desc !== empty}>{node.desc}</Desc>}
      {node.sections?.map((s) => (
        <React.Fragment key={s.title}>
          <Band>{s.title}<ChevronUp size={8} /></Band>
          {s.rows.map((r) => (
            <Row key={r.text} $h={s.rowHeight ?? 19} $pad={s.pad ?? 9}>
              {r.link ? (
                <>
                  <LinkNumber>{r.link}</LinkNumber>
                  <LinkInput readOnly value={r.text} aria-label={`Link ${r.link}`} />
                </>
              ) : r.text}
              {r.port && <Port $top={9} $open={r.port === "open"} />}
            </Row>
          ))}
          {s.addNew && (
            <AddNew>
              <svg width="8" height="8" viewBox="0 0 8 8">
                <circle cx="4" cy="4" r="4" fill="#8fd6f5" />
                <circle cx="4" cy="4" r="2.6" fill="#14a3e3" />
                <path d="M4 2.5v3M2.5 4h3" stroke="#fff" strokeWidth=".7" />
              </svg>
              Add New
            </AddNew>
          )}
        </React.Fragment>
      ))}
    </Card>
  );
}

export default function App() {
  return (
    <Desktop>
      <GlobalStyle />
      <Window>
        <TabStrip>
          <TabSearch aria-label="Search tabs"><ChevronDown size={13} strokeWidth={2.5} /></TabSearch>
          <BrowserTab>
            <WebexIcon />Webex Control Hub
            <button aria-label="Close tab"><X size={12} strokeWidth={2.5} /></button>
          </BrowserTab>
          <BrowserTab $active>
            <FlowIcon />Flow Designer
            <button aria-label="Close tab"><X size={12} strokeWidth={2.5} /></button>
          </BrowserTab>
          <NewTab aria-label="New tab"><Plus size={14} /></NewTab>
          <WindowButtons>
            <button aria-label="Minimize"><Minus size={14} strokeWidth={1.5} /></button>
            <button aria-label="Maximize"><Square size={14} strokeWidth={1.5} /></button>
            <button aria-label="Close"><X size={15} strokeWidth={1.5} /></button>
          </WindowButtons>
        </TabStrip>
        <Toolbar>
          <NavButtons>
            <NavButton aria-label="Back"><ArrowLeft size={16} /></NavButton>
            <NavButton aria-label="Forward" $muted><ArrowRight size={16} /></NavButton>
            <NavButton aria-label="Reload"><RotateCw size={15} /></NavButton>
          </NavButtons>
          <AddressBar>
            <SiteInfo aria-label="Site information"><TuneIcon /></SiteInfo>
            <Address
              aria-label="Address"
              readOnly
              value="flow-control.produs1.ciscoccservice.com/flow/673f04adcaa8643d2c54159e?orgId=e56f00d4-98d8-4b62-a165-d05a41243d98&version=6764153fb299282397feba1c&analytics=true&startDate=12%2F19%2F2024&endDate..."
            />
            <AddressActions>
              <MonitorDown size={17} />
              <ZoomOut size={16} />
              <Star size={17} />
            </AddressActions>
          </AddressBar>
          <ToolbarEnd>
            <CaptureIcon />
            <ExtensionIcon />
            <Divider $h={16} $color="#f6cfca" />
            <WebexIcon size={18} />
            <MoreVertical size={18} strokeWidth={2.5} />
          </ToolbarEnd>
        </Toolbar>
        <Bookmarks>
          <Bookmark $w={31} href="#"><AppsIcon /></Bookmark>
          <Divider $h={16} $color="#f6cfca" />
          <Bookmark $w={48} $first href="#"><WebexIcon /></Bookmark>
          <Bookmark $w={140} href="#"><Folder size={17} strokeWidth={1.7} />Webex Dev Portals</Bookmark>
          <Bookmark $w={154} href="#"><CloudSearchIcon />CL – Google Cloud...</Bookmark>
          <Bookmark $w={113} href="#"><HexIcon top="#1558c0" body="#5c9cec" />Dialogflow CX</Bookmark>
          <Bookmark $w={110} href="#"><HexIcon top="#f79a3d" body="#ef7a2c" />Dialogflow ES</Bookmark>
          <Bookmark $w={139} href="#"><CiscoIcon />Webex CC Desktop</Bookmark>
          <Bookmark $w={81} href="#"><WebexIcon />connect</Bookmark>
          <Bookmark $w={105} href="#"><HelloIcon />Hello World!</Bookmark>
          <Bookmark href="#"><PostmanIcon />Postman</Bookmark>
        </Bookmarks>

        <AppBody>
          <AppHeader>
            <Brand>
              <div><strong>Cisco</strong> Webex</div>
              <div>Flow Designer</div>
            </Brand>
            <FlowPicker>Main_Flow_140<ChevronDown size={17} strokeWidth={1.5} /></FlowPicker>
            <Version>Version 36</Version>
            <Pill>Latest</Pill>
            <Divider $h={26} $color="#ccc" />
            <EditToggle><input type="checkbox" disabled />Edit: Off</EditToggle>
            <ReadOnly>Read-Only</ReadOnly>
            <HeaderActions>
              <button aria-label="Help"><CircleHelp size={15} strokeWidth={1.5} /></button>
              <button aria-label="Exit"><ExitIcon /></button>
            </HeaderActions>
          </AppHeader>
          <TabsBar>
            <FlowTab $active $w={102}><MainFlowIcon />Main Flow</FlowTab>
            <FlowTab $w={106}><BoltIcon />Event Flows</FlowTab>
            <FlowTab $w={60}><CircleHelp size={11} strokeWidth={1.8} />Help</FlowTab>
            <RoundButton aria-label="View options"><SlidersIcon /></RoundButton>
          </TabsBar>
          <Analytics>
            <FilterRow>
              <DateRange>
                <CalendarDays size={16} strokeWidth={1.2} color="#777" />
                <Preset>Today</Preset>
                <Divider $h={11} $color="#ccc" />
                <DateField $w={96} readOnly aria-label="Start date" value="12/19/2024" />
                <ArrowRight size={12} strokeWidth={1.7} />
                <DateField $w={70} readOnly aria-label="End date" value="12/19/2024" />
                <ClearButton aria-label="Clear dates"><X size={8} /></ClearButton>
              </DateRange>
              <button aria-label="Refresh"><RotateCw size={13} strokeWidth={1.5} /></button>
            </FilterRow>
            <Metrics>
              {metrics.map((m) => (
                <div key={m.label}>
                  <MetricLabel>{m.label}<Info size={11} strokeWidth={1.5} /></MetricLabel>
                  <MetricValue>{m.value}</MetricValue>
                </div>
              ))}
              <div>
                <MetricLabel><mark>Activity errors | Activity error</mark>%<Info size={11} strokeWidth={1.5} /></MetricLabel>
                <MetricValue>1 | 3.85%</MetricValue>
              </div>
            </Metrics>
          </Analytics>

          <Canvas>
            <Wires width="1815" height="702" viewBox="1 0 1815 702">
              <g stroke="#b3b3b3" strokeWidth="1">{thinWires.map((d) => <path key={d} d={d} />)}</g>
              <g stroke={navy} strokeWidth="6">{heavyWires.map((d) => <path key={d} d={d} />)}</g>
              <g stroke={errorRed} strokeWidth="4">{errorWires.map((d) => <path key={d} d={d} />)}</g>
            </Wires>
            {nodes.map((n) => <FlowNode key={n.id} node={n} />)}
            {tags.map((t) => <Tag key={t.x} $x={t.x} $y={t.y} $error={t.error}>{t.text}</Tag>)}
            <Collapse aria-label="Collapse analytics"><ChevronUp size={9} /></Collapse>
            <CanvasTools>
              <ToolPill>
                <button aria-label="Settings"><Settings size={15} strokeWidth={1.5} /></button>
                <Divider $h={19} $color="#ddd" />
                <button aria-label="Fit"><FitIcon /></button>
                <button aria-label="Zoom out"><ZoomOut size={14} strokeWidth={1.5} /></button>
                <button aria-label="Zoom in"><ZoomIn size={14} strokeWidth={1.5} /></button>
              </ToolPill>
              <Legend>{legend.map(([t, c]) => <LegendItem key={t} $color={c}>{t}</LegendItem>)}</Legend>
            </CanvasTools>
          </Canvas>

          <Details>Activity Usage Details: None selected<button aria-label="Expand"><ExpandIcon /></button></Details>
          <BottomBar>
            <Status>
              <div>Autosave Enabled <Info size={10} strokeWidth={1.6} /></div>
              <div>Application Version: 0.4.559-0 <Info size={10} strokeWidth={1.6} /></div>
            </Status>
            <ModeButton><Pencil size={14} strokeWidth={1.4} />Design</ModeButton>
            <ModeButton><Bug size={14} strokeWidth={1.4} />Debug</ModeButton>
            <ModeButton $active><ChartColumn size={14} strokeWidth={1.5} />Analyze</ModeButton>
          </BottomBar>
        </AppBody>
      </Window>
      <Pointer width="13" height="20" viewBox="0 0 13 20">
        <path d="M1 1V16L4.5 12.7 7 18.5 9.5 17.4 7 11.8H12Z" fill="#fff" stroke="#111" />
      </Pointer>
    </Desktop>
  );
}
